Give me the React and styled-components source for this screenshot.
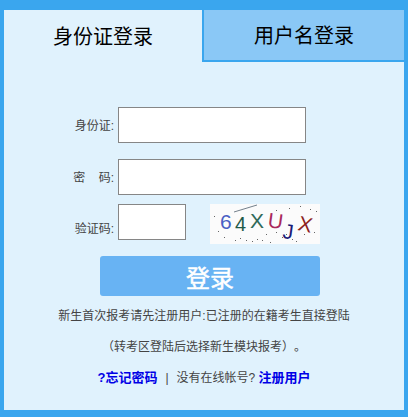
import React from "react";
import styled, { createGlobalStyle } from "styled-components";

const Global = createGlobalStyle`
html, body { margin: 0; padding: 0; background: #3aa6ee; }
body { font-family: "Liberation Sans", "Noto Sans CJK SC", sans-serif; }
`

const Box = styled.div`
width: 400px;
height: 400px;
border: solid #3aa6ee;
border-width: 10px 4px 7px;
background: #e0f2fd;
`

const Tabs = styled.div`
display: grid;
grid-template-columns: 198px 202px;
height: 52px;
`

const Tab = styled.div`
display: flex;
align-items: center;
justify-content: center;
box-sizing: border-box;
font-size: 20px;
padding-bottom: 2px;
color: #000;
background: ${(p) => (p.$active ? "#e0f2fd" : "#8ac8f6")};
border-left: ${(p) => (p.$active ? "0" : "2px solid #3aa6ee")};
border-bottom: ${(p) => (p.$active ? "0" : "2px solid #3aa6ee")};
`

const Form = styled.form`
display: grid;
grid-template-columns: 114px auto;
row-gap: 16px;
padding-top: 45px;
`

const Label = styled.label`
font-size: 12px;
color: #444;
justify-self: end;
align-self: center;
padding-right: 4px;
padding-bottom: 1px;
white-space: pre;
`

const Input = styled.input`
box-sizing: border-box;
display: block;
width: ${(p) => p.$w}px;
height: 36px;
border: 1px solid #868686;
background: #fff;
padding: 0;
`

const CodeLabel = styled(Label)`
align-self: end;
padding-bottom: 8px;
`

const CodeRow = styled.div`
display: flex;
gap: 24px;
margin-top: -7px;
`

const Captcha = styled.svg`
display: block;
width: 110px;
height: 40px;
background: #fbfbfb;
`

const Submit = styled.button`
display: block;
width: 220px;
height: 40px;
margin: 12px 0 0 96px;
padding: 0;
border: 0;
border-radius: 3px;
background: #68b3f3;
color: #fff;
font-size: 24px;
font-family: inherit;
-webkit-text-stroke: 0.5px #fff;
`

const Note = styled.p`
margin: 0;
height: 31px;
line-height: 31px;
text-align: center;
font-size: 12px;
color: #444;
text-spacing-trim: space-all;
`

const Notes = styled.div`
padding-top: 5px;
`

const Links = styled(Note)`
margin-top: -1px;
`

const Link = styled.a`
color: #0000e6;
font-weight: bold;
font-size: 13px;
`

const Sep = styled.span`
margin: 0 8px;
`

const chars = [
  ["6", 10, 25, "#4a5fc4", 0, 21],
  ["4", 25, 27, "#1f5a48", 0, 20],
  ["X", 40, 24, "#2f6a5a", 0, 21],
  ["U", 57, 23, "#a8285c", 8, 21],
  ["J", 72, 34, "#1c1c78", 8, 21],
  ["X", 87, 26, "#8c2020", 12, 21],
]

const dots = [
  [8, 27], [14, 33], [30, 34], [36, 36], [47, 35], [52, 36], [60, 38], [66, 28],
  [72, 33], [82, 35], [86, 37], [90, 2], [100, 5], [106, 7], [79, 4], [66, 6],
  [4, 12], [42, 37], [94, 30], [104, 28], [25, 36], [56, 30], [76, 30],
]

export default function App() {
  return (
    <Box>
      <Global />
      <Tabs>
        <Tab $active>身份证登录</Tab>
        <Tab>用户名登录</Tab>
      </Tabs>
      <Form onSubmit={(e) => e.preventDefault()}>
        <Label>身份证:</Label>
        <Input $w={188} />
        <Label>密{"    "}码:</Label>
        <Input $w={188} />
        <CodeLabel>验证码:</CodeLabel>
        <CodeRow>
          <Input $w={68} />
          <Captcha viewBox="0 0 110 40">
            <line x1="24" y1="8" x2="47" y2="1" stroke="#3a4a5a" strokeWidth="0.7" />
            {dots.map(([x, y], i) => (
              <rect key={i} x={x} y={y} width="1" height="1" fill="#666" />
            ))}
            {chars.map(([c, x, y, col, rot, size], i) => (
              <text
                key={i}
                x={x}
                y={y}
                fill={col}
                fontSize={size}
                fontFamily="Liberation Sans, sans-serif"
                transform={`rotate(${rot} ${x} ${y})`}
              >
                {c}
              </text>
            ))}
          </Captcha>
        </CodeRow>
      </Form>
      <Submit type="button">登录</Submit>
      <Notes>
        <Note>新生首次报考请先注册用户:已注册的在籍考生直接登陆</Note>
        <Note>（转考区登陆后选择新生模块报考）。</Note>
        <Links>
          <Link>?忘记密码</Link>
          <Sep>|</Sep>
          没有在线帐号? <Link>注册用户</Link>
        </Links>
      </Notes>
    </Box>
  );
}
